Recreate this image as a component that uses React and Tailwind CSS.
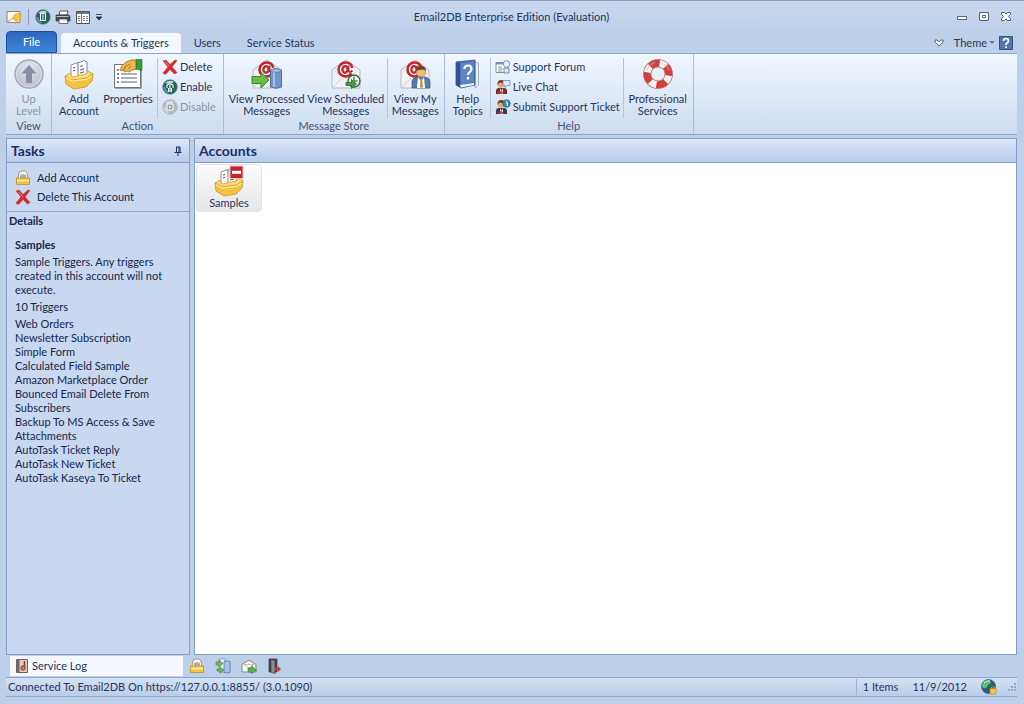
import React, { useState } from 'react';
import clsx from 'clsx';

const TRIGGERS = [
  'Web Orders',
  'Newsletter Subscription',
  'Simple Form',
  'Calculated Field Sample',
  'Amazon Marketplace Order',
  'Bounced Email Delete From Subscribers',
  'Backup To MS Access & Save Attachments',
  'AutoTask Ticket Reply',
  'AutoTask New Ticket',
  'AutoTask Kaseya To Ticket',
];

const TABS = ['Accounts & Triggers', 'Users', 'Service Status'];

/* ---------- icons ---------- */

function UpIcon() {
  return (
    <svg viewBox="0 0 32 32" className="size-8">
      <defs>
        <radialGradient id="up" cx="50%" cy="30%" r="70%">
          <stop offset="0" stopColor="#e6e8ef" />
          <stop offset="1" stopColor="#b9bdca" />
        </radialGradient>
      </defs>
      <circle cx="16" cy="16" r="14" fill="url(#up)" stroke="#a2a7b5" strokeWidth="1.400" />
      <circle cx="16" cy="16" r="12.500" fill="none" stroke="#dfe2ea" />
      <path d="M16 7l7.500 8.500H19V25h-6v-9.500H8.500z" fill="#878ea6" />
    </svg>
  );
}

function TrayIcon({ className = 'size-8', stop = false }) {
  return (
    <svg viewBox="0 0 32 32" className={className}>
      <path d="M8 7l7-2.500 1 15-8 2z" fill="#fff" stroke="#8b919c" />
      <path d="M15 5l6-2.500 3 1.500v15l-9 2z" fill="#fafafa" stroke="#7f8590" />
      <path d="M10 10l2-.6M10 13l2-.6M17 8.500l3-1M17 12l4-1.200M17 15l4-1.200" stroke="#666d7a" strokeWidth="1.300" />
      <path d="M2 18l5-3 2 4 14-3 2-3 5 3-6 4-15 3z" fill="#f9dc78" stroke="#d69a20" strokeWidth=".8" />
      <path d="M2 18l7 4 15-2 6-4-1 7-6 6-12 2-8-5z" fill="#f3c23f" stroke="#cf9420" strokeWidth=".8" />
      <path d="M3 19.500l6 3.600 15-2 5-3.300" fill="none" stroke="#fdeba6" strokeWidth="1.300" />
      {stop && (
        <>
          <path d="M17 1h13v12.500H17z" fill="#c9202c" stroke="#ecc4c6" />
          <path d="M19 5.800h9v3h-9z" fill="#fff" />
        </>
      )}
    </svg>
  );
}

function PropertiesIcon() {
  return (
    <svg viewBox="0 0 32 32" className="size-8">
      <path d="M2.500 6.500h26v23h-26z" fill="#fff" stroke="#6f7786" />
      <path d="M3 30.500h26.500V9" fill="none" stroke="#9ca2ae" />
      <path d="M5 12h2M5 16h2M5 20h2M5 24h2" stroke="#5a6372" strokeWidth="1.300" />
      <path d="M9 16h16M9 20h16M9 24h16" stroke="#8d95a3" strokeWidth="1.300" />
      <path d="M8 12q2-5 6-8l5-2h6v9l-5 1-3 2-2-1-2 1-1.500-1L14 8l-4 5z" fill="#e9b84c" stroke="#9c6a1b" strokeWidth=".8" />
      <path d="M14 8l4-2M16 11l3-3" stroke="#9c6a1b" strokeWidth=".8" />
      <path d="M24 1.500h6v11l-6-1.500z" fill="#3c9c33" stroke="#1d6d22" strokeWidth=".6" />
    </svg>
  );
}

function DeleteIcon() {
  return (
    <svg viewBox="0 0 16 16" className="size-4">
      <path d="M1 2l3-1 4 4.500L13 1l2 .5L10 8l5 5.500-2.500 1.500L8 10.500 3.500 15.500 1 14l5-6z" fill="#d92a2a" stroke="#b12222" strokeWidth=".5" />
      <path d="M3 2.500l4.500 5" stroke="#f28a80" />
    </svg>
  );
}

function GlobeIcon({ off = false }) {
  return (
    <svg viewBox="0 0 16 16" className="size-4">
      <circle cx="8" cy="8" r="7.300" fill={off ? '#b4b8c0' : '#28635a'} stroke={off ? '#a5aab4' : '#54788f'} strokeWidth=".6" />
      <path d="M3 4q5-4 9-1-3 3-9 1z" fill={off ? '#dcdfe4' : '#b9dfcd'} />
      <path d="M2 8q1 4 4 6" fill="none" stroke={off ? '#dcdfe4' : '#5e9ce0'} strokeWidth="1.500" />
      {off ? (
        <path d="M5 5h6v6H5zM7.500 7.500h1v1h-1z" fill="#989da8" stroke="#fff" />
      ) : (
        <path d="M5 9V6q3-2 6 0v3M8 6v7M6.500 9v4M9.500 9v4" fill="none" stroke="#fff" strokeWidth="1.100" />
      )}
    </svg>
  );
}

// globe with the pause mark, used in the quick access bar
function PausedGlobeIcon() {
  return (
    <svg viewBox="0 0 16 16" className="size-4">
      <circle cx="8" cy="8" r="7.300" fill="#28635a" stroke="#54788f" strokeWidth=".6" />
      <path d="M3 4q5-4 9-1-3 3-9 1z" fill="#b9dfcd" />
      <path d="M2 8q1 4 4 6" fill="none" stroke="#5e9ce0" strokeWidth="1.500" />
      <path d="M5.500 4.500h5v7h-5z" fill="#28635a" stroke="#fff" />
      <path d="M8 5v6" stroke="#fff" />
    </svg>
  );
}

function Envelope() {
  return (
    <>
      <path d="M2 12L16 2l14 10v18H2z" fill="#f1f2f4" stroke="#b3b9c4" />
      <path d="M5 13L16 4l11 9-11 8z" fill="#fff" stroke="#d2d6de" strokeWidth="0.600" />
      <path d="M2 30l10-10M30 30L20 20" stroke="#c9ced7" />
      <circle cx="15.500" cy="11.500" r="7" fill="none" stroke="#c4262b" strokeWidth="2.600" strokeDasharray="38 6" strokeDashoffset="-4" />
      <ellipse cx="15" cy="11.500" rx="2.600" ry="3.200" fill="none" stroke="#c4262b" strokeWidth="2.400" />
      <path d="M18.500 7.500v5q1 3 4 0" fill="none" stroke="#c4262b" strokeWidth="2" />
    </>
  );
}

function ProcessedIcon() {
  return (
    <svg viewBox="0 0 32 32" className="size-8">
      <Envelope />
      <path d="M1 18.500h9V14l8 8-8 8v-4.500H1z" fill="#6cbb45" stroke="#3c8a2b" />
      <path d="M19.500 12q5.500-2.500 11 0v17q-5.500 2.500-11 0z" fill="#7394c9" stroke="#4d6ca3" />
      <path d="M23 14v15" stroke="#a9c0e4" strokeWidth="2" />
      <ellipse cx="25" cy="12.500" rx="5.300" ry="1.600" fill="#b0c5e8" stroke="#4d6ca3" strokeWidth=".7" />
    </svg>
  );
}

function ScheduledIcon() {
  return (
    <svg viewBox="0 0 32 32" className="size-8">
      <Envelope />
      <circle cx="24" cy="23" r="6" fill="#f3fbf2" stroke="#2c6d35" strokeWidth="1.400" />
      <path d="M24 18.500V23h3.500" fill="none" stroke="#333" />
      <path d="M16 24.500h5.500v-3l5 4.500-5 4.500v-3H16z" fill="#49a03a" stroke="#1c5a23" strokeWidth=".7" />
    </svg>
  );
}

function MyMessagesIcon() {
  return (
    <svg viewBox="0 0 32 32" className="size-8">
      <Envelope />
      <path d="M13 30v-6q0-4 5-5h8q5 1 5 5v6z" fill="#5a7baa" stroke="#3b5785" strokeWidth=".7" />
      <path d="M19 19l3 4 3-4 1 11h-8z" fill="#fff" />
      <path d="M21.500 21H23l1 8-1.500 1-1.500-1z" fill="#c98b2b" />
      <circle cx="22" cy="14" r="4.800" fill="#eeb983" stroke="#a8713e" strokeWidth=".6" />
      <path d="M17 13q0-5 5-5t5 5q-3-3-10 0z" fill="#6b4423" />
    </svg>
  );
}

function BookIcon() {
  return (
    <svg viewBox="0 0 32 32" className="size-8">
      <path d="M23 4l3.500 1v22L23 30z" fill="#eceff5" stroke="#8295b8" strokeWidth=".7" />
      <path d="M4 4l19-2v25L9 30l-5-3z" fill="#4b72b4" stroke="#35548c" strokeWidth=".8" />
      <path d="M4 4l4 1v24l-4-2z" fill="#2f5390" />
      <path d="M8 27l14-2v2L9 29.500z" fill="#f2f4f8" />
      <path d="M9 5l13-1.500V24L9 26z" fill="#5f85c2" />
      <path d="M12.500 11q0-3.500 3.500-3.500t3.500 3.500q0 1.700-1.700 3T16 17" fill="none" stroke="#fff" strokeWidth="2.200" />
      <path d="M14.800 19h2.400v2.400h-2.400z" fill="#fff" />
    </svg>
  );
}

function ForumIcon() {
  return (
    <svg viewBox="0 0 16 16" className="size-4">
      <path d="M1 3.500h12v10H1z" fill="#fff" stroke="#8391a8" />
      <path d="M1 3.500h12v2H1z" fill="#6f8fc4" />
      <path d="M3 8h4M3 10h5M3 12h4" stroke="#8391a8" />
      <circle cx="11.500" cy="5" r="3.300" fill="#e6eefa" stroke="#7d97c0" />
      <path d="M9 9h5v5H9z" fill="#dce6f4" stroke="#7089b2" />
    </svg>
  );
}

function PersonIcon({ info = false }) {
  return (
    <svg viewBox="0 0 16 16" className="size-4">
      <path d="M1 15v-3q0-3 3-3h5q3 0 3 3v3z" fill={info ? '#3c3a46' : '#7b2f28'} />
      <path d="M5 9l1.500 3L8 9v6H5z" fill="#f3e5de" />
      <path d="M2 13l4-1 3 2-3 1z" fill="#b6382b" />
      <circle cx="6" cy="5.500" r="3.300" fill="#e7a873" />
      <path d="M2.500 6q-.5-5 4-5 3.500 0 3 4-3-2-5-1.500-1 .5-2 2.500z" fill="#75351c" />
      {info ? (
        <>
          <circle cx="11.500" cy="4.500" r="3.800" fill="#2f8aa8" stroke="#1b6280" strokeWidth=".6" />
          <path d="M11 2.300h1.300M11 4h1.300v3" stroke="#fff" strokeWidth="1.100" fill="none" />
        </>
      ) : (
        <path d="M8 1.500h7v5h-3l-2 2v-2H8z" fill="#dfe8f6" stroke="#7188b5" strokeWidth=".8" />
      )}
    </svg>
  );
}

function LifebuoyIcon() {
  return (
    <svg viewBox="0 0 32 32" className="size-8">
      <circle cx="16" cy="16" r="10.800" fill="none" stroke="#a8443e" strokeWidth="8" />
      <circle cx="16" cy="16" r="10.800" fill="none" stroke="#f4f2f3" strokeWidth="7" />
      {/* four red bands, one per quarter turn */}
      <circle cx="16" cy="16" r="10.800" fill="none" stroke="#d0433c" strokeWidth="7" pathLength="80" strokeDasharray="12 8" strokeDashoffset="-10" />
      <path d="M5 12q2-6 8-7.500M22 6q4 2 5 7" fill="none" stroke="#f0a79f" strokeWidth="1.200" opacity=".6" />
    </svg>
  );
}

function BagIcon() {
  return (
    <svg viewBox="0 0 16 16" className="size-4">
      <path d="M3 9l1-6.500 3-1.500h3l2 2 1 6z" fill="#fff" stroke="#a3946c" />
      <path d="M6 8V4.500M8 8V4M10 8V4.500" stroke="#555d6c" />
      <path d="M1.500 8h13v6.500h-13z" fill="#f3c443" stroke="#c99a35" />
      <path d="M2 10.500h12" stroke="#fdeeb0" strokeWidth="1.500" />
    </svg>
  );
}

function AppIcon() {
  return (
    <svg viewBox="0 0 16 16" className="size-4">
      <path d="M1 2.500h13v11H1z" fill="#fbf7ef" stroke="#8e8371" />
      <path d="M1.500 13l5-4 3 2" fill="none" stroke="#b5a88e" />
      <path d="M9 5l6-1-2 3.500 2.500.5L9 15l1-5H6.500z" fill="#f8c53c" stroke="#dfa023" strokeWidth=".6" />
    </svg>
  );
}

function PrinterIcon() {
  return (
    <svg viewBox="0 0 16 16" className="size-4">
      <path d="M4 6l1-4h8l-1 4z" fill="#fff" stroke="#555" />
      <path d="M1 6h13l1 2v4H1z" fill="#454a52" stroke="#2c3036" strokeWidth=".6" />
      <path d="M1.500 7.500h12" stroke="#b8bdc6" />
      <path d="M4 10h8l1 4.500H4z" fill="#f5f5f5" stroke="#555" strokeWidth=".8" />
    </svg>
  );
}

function ListIcon() {
  return (
    <svg viewBox="0 0 16 16" className="size-4">
      <path d="M1.500 2.500h13v12h-13z" fill="#fff" stroke="#4e535b" />
      <path d="M2 3h12v2H2z" fill="#70757d" />
      <path d="M6.500 5v9M3 7.500h2M3 9.500h2M3 11.500h2M8 7.500h2M11 7.500h2M8 9.500h2M11 9.500h2M8 11.500h2M11 11.500h2" stroke="#777c85" />
    </svg>
  );
}

function LogIcon() {
  return (
    <svg viewBox="0 0 16 16" className="size-4">
      <path d="M2.500 1.500h11v13h-11z" fill="#d9cfc6" stroke="#6d6062" />
      <path d="M3 2h2.500v12H3z" fill="#6c6a7a" />
      <path d="M10.500 3v6" stroke="#a5302a" strokeWidth="1.500" />
      <circle cx="9" cy="10" r="2.200" fill="#d9822e" stroke="#a5302a" />
    </svg>
  );
}

function TransferIcon() {
  return (
    <svg viewBox="0 0 16 16" className="size-4">
      <path d="M4 1h6v13H4z" fill="#eef2f8" stroke="#7f8da5" strokeWidth=".7" />
      <path d="M9 3.500q3-1 6 0v11q-3 1-6 0z" fill="#a9c2ea" stroke="#5370a5" strokeWidth=".8" />
      <path d="M1 4h3V2l4 3.500L4 9V7H1zM2 11h3V9l4 3-4 3v-2H2z" fill="#6fb956" stroke="#3f7d35" strokeWidth=".6" />
    </svg>
  );
}

function MailGoIcon() {
  return (
    <svg viewBox="0 0 16 16" className="size-4">
      <path d="M1 6.500L8 2l7 4.500v7.500H1z" fill="#f7f8f6" stroke="#7d8a82" />
      <path d="M3 6.500h10L8 10z" fill="#fff" stroke="#9aa69e" strokeWidth=".7" />
      <path d="M7 10h3.500V8l5 4-5 3.500V14H7z" fill="#5cb54a" stroke="#2f7d25" strokeWidth=".6" />
    </svg>
  );
}

function DoorIcon() {
  return (
    <svg viewBox="0 0 16 16" className="size-4">
      <path d="M2 1h8v13H2z" fill="#4c5059" stroke="#2b2e35" strokeWidth=".7" />
      <path d="M4 1l4 2v13l-4-2z" fill="#8e9097" stroke="#2b2e35" strokeWidth=".6" />
      <path d="M8 9.500h3V8l3 3-3 3v-1.500H8z" fill="#c53d46" />
    </svg>
  );
}

function NetworkIcon() {
  return (
    <svg viewBox="0 0 16 16" className="size-4">
      <circle cx="7.500" cy="7.500" r="7" fill="#275f7e" stroke="#254f5c" strokeWidth=".6" />
      <path d="M1 5q3-5 8-3.500l1 3-3 1-1 3-3 1-2-2z" fill="#58bf72" />
      <path d="M3 4q3-3 6-2" fill="none" stroke="#d7f3dc" />
      <path d="M9 9.500h6V15H9z" fill="#f5c744" stroke="#b98a1d" strokeWidth=".7" />
      <path d="M10.500 9.500V8h3v1.500" fill="none" stroke="#b98a1d" />
    </svg>
  );
}

/* ---------- ribbon parts ---------- */

function BigButton({ icon, lines, className, disabled }) {
  return (
    <button
      type="button"
      disabled={disabled}
      className={clsx('flex shrink-0 flex-col items-center pt-1', disabled && 'text-[#8d96a5]', className)}
    >
      {icon}
      <span className="mt-[3px] whitespace-pre leading-3">{lines.join('\n')}</span>
    </button>
  );
}

function SmallButton({ icon, label, disabled }) {
  return (
    <button
      type="button"
      disabled={disabled}
      className={clsx('flex h-5 items-center gap-0.5 whitespace-nowrap', disabled && 'text-[#8d96a5]')}
    >
      {icon}
      {label}
    </button>
  );
}

function Group({ label, children }) {
  return (
    <section aria-label={label} className="flex shrink-0 flex-col border-r border-[#a9bdd8]">
      <div className="flex h-16 px-px">{children}</div>
      <div className="text-center leading-4 text-[#3c5478]">{label}</div>
    </section>
  );
}

function Divider() {
  return <div className="mt-1 h-15 w-px shrink-0 bg-[#b3c5de]" />;
}

function PanelHeader({ title, children }) {
  return (
    <div className="flex h-6 items-center justify-between border-b border-[#7f9dc6] bg-linear-to-b from-[#dbe7f7] to-[#b7cceb] px-1">
      <h2 className="text-[14px] font-bold text-[#1b2f63]">{title}</h2>
      {children}
    </div>
  );
}

export default function App() {
  const [activeTab, setActiveTab] = useState(TABS[0]);

  return (
    <div className="flex min-h-screen flex-col border-t border-[#8a9db9] bg-[#bdd0ea] pb-[7px] pl-1.5 pr-[7px] font-[Lato,'Open_Sans',sans-serif] text-[11px] text-[#1e355c] [font-variant-ligatures:none]">
      {/* Title bar */}
      <header className="-ml-1.5 -mr-[7px] grid h-8 grid-cols-[1fr_auto_1fr] items-center bg-linear-to-b from-[#c9d8ef] to-[#bccfea] pl-1.5 pr-[7px]">
        <div className="flex items-center">
          <button type="button" aria-label="System menu"><AppIcon /></button>
          <span className="mx-1.5 h-4 w-px bg-[#8a9bb8]" />
          <button type="button" aria-label="Pause service"><PausedGlobeIcon /></button>
          <button type="button" aria-label="Print" className="ml-1"><PrinterIcon /></button>
          <button type="button" aria-label="View list" className="ml-1"><ListIcon /></button>
          <button type="button" aria-label="Customize toolbar" className="ml-1">
            <svg viewBox="0 0 8 8" className="size-2"><path d="M1 1.500h6M1 4h6L4 7z" fill="#26344d" stroke="#26344d" strokeWidth=".8" /></svg>
          </button>
        </div>
        <h1>Email2DB Enterprise Edition (Evaluation)</h1>
        <div className="flex justify-end gap-2 pr-1">
          <button type="button" aria-label="Minimize">
            <svg viewBox="0 0 14 14" className="size-3.5"><path d="M2.500 6.500h9v3h-9z" fill="#fff" stroke="#54617a" /></svg>
          </button>
          <button type="button" aria-label="Restore">
            <svg viewBox="0 0 14 14" className="size-3.5"><path d="M2.500 2.500h9v8h-9zM5.500 5.500h3v2h-3z" fill="#fff" stroke="#54617a" /></svg>
          </button>
          <button type="button" aria-label="Close">
            <svg viewBox="0 0 14 14" className="size-3.5"><path d="M2.500 2.500h3L7 4l1.500-1.500h3v2L9.500 6.500l2 2v2h-3L7 9l-1.500 1.500h-3v-2l2-2-2-2z" fill="#fff" stroke="#54617a" /></svg>
          </button>
        </div>
      </header>

      {/* Tab row */}
      <div className="flex h-5 items-end">
        <button type="button" className="h-[22px] w-[51px] shrink-0 rounded-t-sm border border-[#1d4fa0] bg-linear-to-b from-[#2f66bd] to-[#3d86dc] text-white">
          File
        </button>
        <nav className="ml-1 flex h-5">
          {TABS.map((tab) => (
            <button
              key={tab}
              type="button"
              onClick={() => setActiveTab(tab)}
              className={clsx('h-full whitespace-nowrap rounded-t-sm', tab === activeTab ? 'bg-[#f3f8fe] px-3' : 'px-[13px]')}
            >
              {tab}
            </button>
          ))}
        </nav>
        <div className="ml-auto flex h-full items-center">
          <button type="button" aria-label="Collapse ribbon">
            <svg viewBox="0 0 10 10" className="size-2.5"><path d="M1 2h2l2 2 2-2h2v2L5 8 1 4z" fill="#fff" stroke="#54617a" /></svg>
          </button>
          <button type="button" className="ml-2.5 flex items-center gap-0.5">
            Theme
            <svg viewBox="0 0 6 6" className="size-1.5"><path d="M0 1h6L3 4z" fill="#6a7ea0" /></svg>
          </button>
          <button type="button" aria-label="Help" className="ml-1 mr-1">
            <svg viewBox="0 0 14 14" className="size-3.5">
              <path d="M.5.5h13v13H.5z" fill="#5577a8" stroke="#33507f" />
              <path d="M4.500 5q0-2.500 2.500-2.500T9.500 5q0 1-1.250 1.800T7 9M7 10.200v1.800" fill="none" stroke="#fff" strokeWidth="1.700" />
            </svg>
          </button>
        </div>
      </div>

      {/* Ribbon */}
      <div className="flex h-[82px] border-b border-t border-[#8ba6cc] bg-linear-to-b from-[#f1f7fe] via-[#dfe9f7] to-[#cddcf0]">
        <Group label="View">
          <BigButton disabled icon={<UpIcon />} lines={['Up', 'Level']} className="w-[43px]" />
        </Group>
        <Group label="Action">
          <BigButton icon={<TrayIcon />} lines={['Add', 'Account']} className="ml-0.5 w-12" />
          <BigButton icon={<PropertiesIcon />} lines={['Properties']} className="mr-1 w-[50px]" />
          <Divider />
          <div className="flex flex-col items-start pl-1 pr-1.5 pt-[3px]">
            <SmallButton icon={<DeleteIcon />} label="Delete" />
            <SmallButton icon={<GlobeIcon />} label="Enable" />
            <SmallButton disabled icon={<GlobeIcon off />} label="Disable" />
          </div>
        </Group>
        <Group label="Message Store">
          <BigButton icon={<ProcessedIcon />} lines={['View Processed', 'Messages']} className="ml-0.5 w-20" />
          <BigButton icon={<ScheduledIcon />} lines={['View Scheduled', 'Messages']} className="mr-0.5 w-[78px]" />
          <Divider />
          <BigButton icon={<MyMessagesIcon />} lines={['View My', 'Messages']} className="w-[55px]" />
        </Group>
        <Group label="Help">
          <BigButton icon={<BookIcon />} lines={['Help', 'Topics']} className="w-11" />
          <Divider />
          <div className="flex w-[132px] flex-col items-start pl-1 pt-[3px]">
            <SmallButton icon={<ForumIcon />} label="Support Forum" />
            <SmallButton icon={<PersonIcon />} label="Live Chat" />
            <SmallButton icon={<PersonIcon info />} label="Submit Support Ticket" />
          </div>
          <Divider />
          <BigButton icon={<LifebuoyIcon />} lines={['Professional', 'Services']} className="w-[68px]" />
        </Group>
      </div>

      {/* Panels */}
      <div className="mt-[3px] flex flex-1 gap-1">
        <aside className="w-[184px] shrink-0 border border-[#7f9dc6] bg-[#c8d8f1] text-[#14264a]">
          <PanelHeader title="Tasks">
            <button type="button" aria-label="Pin panel" className="mr-0.5">
              <svg viewBox="0 0 10 10" className="size-2.5"><path d="M3 1h4M3.500 1v5M6 1v5M7 1v5M1.500 6.500h7M5 6.500V10" fill="none" stroke="#1b2f63" /></svg>
            </button>
          </PanelHeader>
          <ul className="border-b border-[#8fabd1] px-2 py-[5px] leading-[19px]">
            <li><button type="button" className="flex items-center gap-1.5"><BagIcon />Add Account</button></li>
            <li><button type="button" className="flex items-center gap-1.5"><DeleteIcon />Delete This Account</button></li>
          </ul>
          <h3 className="px-0.5 pt-px font-bold leading-4">Details</h3>
          <div className="px-2 pt-1.5 leading-[14px]">
            <h4 className="font-bold leading-5">Samples</h4>
            <p className="mb-[3px] w-[155px]">Sample Triggers. Any triggers created in this account will not execute.</p>
            <p className="mb-[3px]">10 Triggers</p>
            <ul className="w-[155px]">
              {TRIGGERS.map((name) => (
                <li key={name}>{name}</li>
              ))}
            </ul>
          </div>
        </aside>

        <main className="flex-1 border border-[#7f9dc6] bg-white">
          <PanelHeader title="Accounts" />
          <div className="flex p-px">
            <button type="button" className="flex w-[66px] flex-col items-center rounded-sm border border-[#e3e3e6] bg-linear-to-b from-[#fcfcfc] to-[#e6e6e9] pb-0.5">
              <TrayIcon stop />
              <span className="leading-3">Samples</span>
            </button>
          </div>
        </main>
      </div>

      {/* Docked tools */}
      <div className="flex h-[22px] items-center pl-1">
        <button type="button" className="flex h-5 w-[173px] items-center gap-0.5 bg-[#f5f9fe] pl-1">
          <LogIcon />
          Service Log
        </button>
        <div className="ml-1.5 flex gap-2.5">
          <button type="button" aria-label="Accounts"><BagIcon /></button>
          <button type="button" aria-label="Processed messages"><TransferIcon /></button>
          <button type="button" aria-label="Scheduled messages"><MailGoIcon /></button>
          <button type="button" aria-label="Exit"><DoorIcon /></button>
        </div>
      </div>

      {/* Status bar */}
      <footer className="flex h-5 items-center border-b border-t border-[#8ba6cc] bg-linear-to-b from-[#d5e2f4] to-[#b9cde9] pl-0.5">
        <span>Connected To Email2DB On https://127.0.0.1:8855/ (3.0.1090)</span>
        <span className="ml-auto border-l border-[#9db3d3] pl-1.5">1 Items</span>
        <span className="ml-3.5">11/9/2012</span>
        <span className="ml-3.5"><NetworkIcon /></span>
        <svg viewBox="0 0 10 10" className="ml-2.5 size-2.5"><path d="M7 1h2v2H7zM4 4h2v2H4zM7 4h2v2H7zM1 7h2v2H1zM4 7h2v2H4zM7 7h2v2H7z" fill="#93a8c8" /></svg>
      </footer>
    </div>
  );
}
